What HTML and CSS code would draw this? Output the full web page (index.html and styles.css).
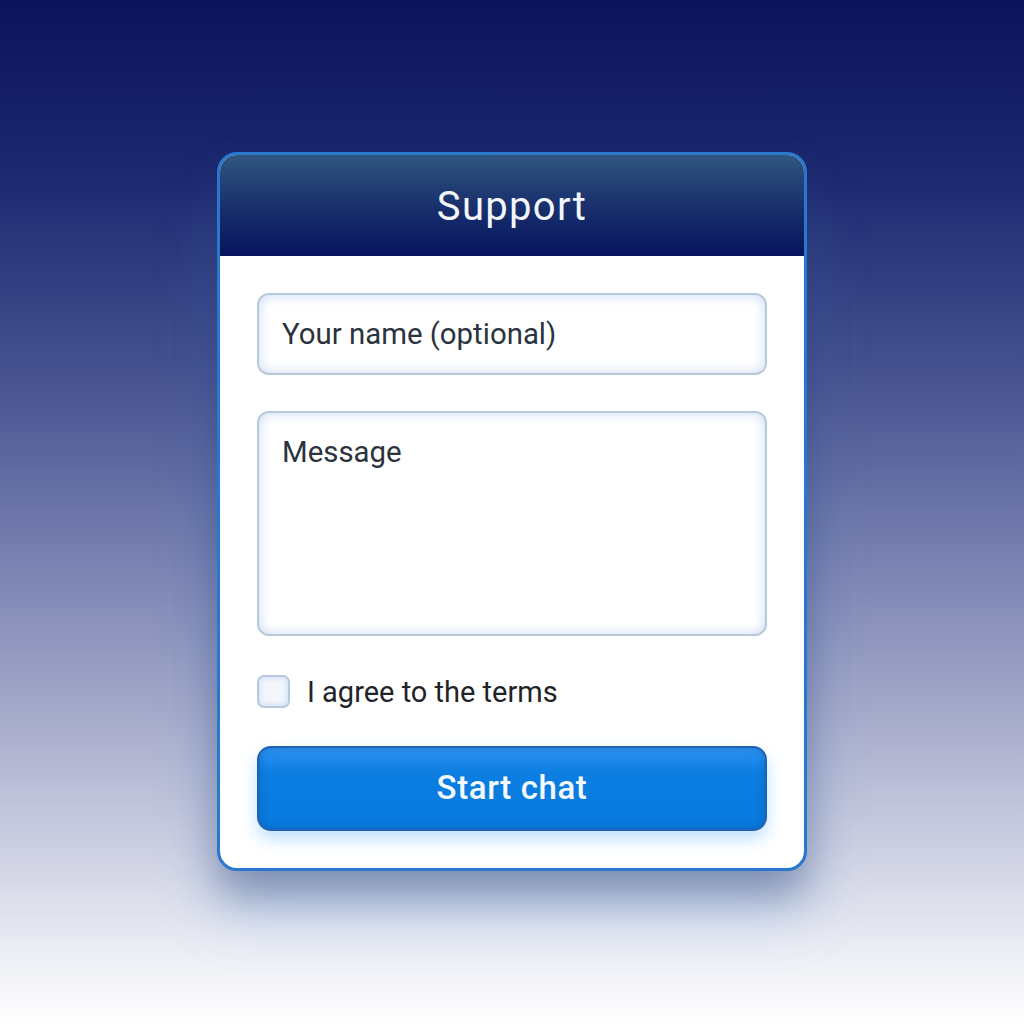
FILE: index.html
```html
<!DOCTYPE html>
<html>
<head>
<meta charset="utf-8">
<link rel="stylesheet" href="styles.css">
</head>
<body>
<div class="page">
  <div class="card">
    <div class="card-header">Support</div>
    <div class="card-body">
      <div class="field field-name">Your name (optional)</div>
      <div class="field field-message">Message</div>
      <label class="agree">
        <span class="box"></span>
        <span class="agree-text">I agree to the terms</span>
      </label>
      <div class="btn">Start chat</div>
    </div>
  </div>
</div>
</body>
</html>
```
FILE: styles.css
```css
html, body {
  margin: 0;
  padding: 0;
  height: 100%;
}
body {
  font-family: Roboto, "Liberation Sans", Arial, sans-serif;
  background: linear-gradient(180deg, #0a135c 0%, #1f2a72 18%, #4a5592 38%, #7a82b2 55%, #a6abcb 70%, #d0d3e4 84%, #f2f3f8 95%, #ffffff 100%);
  width: 1024px;
  height: 1024px;
  overflow: hidden;
}
.page {
  display: flex;
  justify-content: center;
  padding-top: 152px;
}
.card {
  width: 584px;
  border: 3px solid #2a78cc;
  border-radius: 20px;
  background: #ffffff;
  overflow: hidden;
  box-shadow: 0 24px 40px rgba(20, 30, 80, 0.35), 0 40px 60px rgba(90, 170, 240, 0.25);
}
.card-header {
  height: 101px;
  background: linear-gradient(180deg, #30567f 0%, #1b346f 45%, #07135e 100%);
  color: #f2f6fb;
  font-size: 40px;
  letter-spacing: 1.3px;
  display: flex;
  align-items: center;
  justify-content: center;
  padding-top: 1px;
  box-sizing: border-box;
}
.card-body {
  padding: 37px 37px 37px 37px;
  display: flex;
  flex-direction: column;
}
.field {
  border: 2px solid #b7c9db;
  border-radius: 12px;
  background: #ffffff;
  box-shadow: inset 0 0 12px rgba(160, 195, 235, 0.6);
  color: #2a333e;
  font-size: 29.4px;
  box-sizing: border-box;
  padding-left: 23px;
}
.field-name {
  height: 82px;
  display: flex;
  align-items: center;
}
.field-message {
  height: 225px;
  margin-top: 36px;
  padding-top: 22px;
}
.agree {
  display: flex;
  align-items: center;
  margin-top: 39px;
  height: 33px;
}
.box {
  width: 29px;
  height: 29px;
  border: 2px solid #b7c9db;
  border-radius: 7px;
  background: #f3f7fc;
  box-shadow: inset 0 0 6px rgba(160, 195, 235, 0.6);
}
.agree-text {
  margin-left: 17px;
  font-size: 29px;
  color: #1f2429;
}
.btn {
  margin-top: 38px;
  height: 85px;
  border: 2px solid #1f62b0;
  border-radius: 14px;
  background: linear-gradient(180deg, #2e93f2 0%, #0c7ee2 30%, #087ade 100%);
  box-shadow: inset 0 0 10px rgba(10, 70, 150, 0.35), 0 8px 16px rgba(70, 170, 250, 0.35);
  color: #f4f9ff;
  font-size: 33px;
  letter-spacing: 0.6px;
  font-weight: 500;
  display: flex;
  align-items: center;
  justify-content: center;
  box-sizing: border-box;
  padding-bottom: 2px;
}
```
